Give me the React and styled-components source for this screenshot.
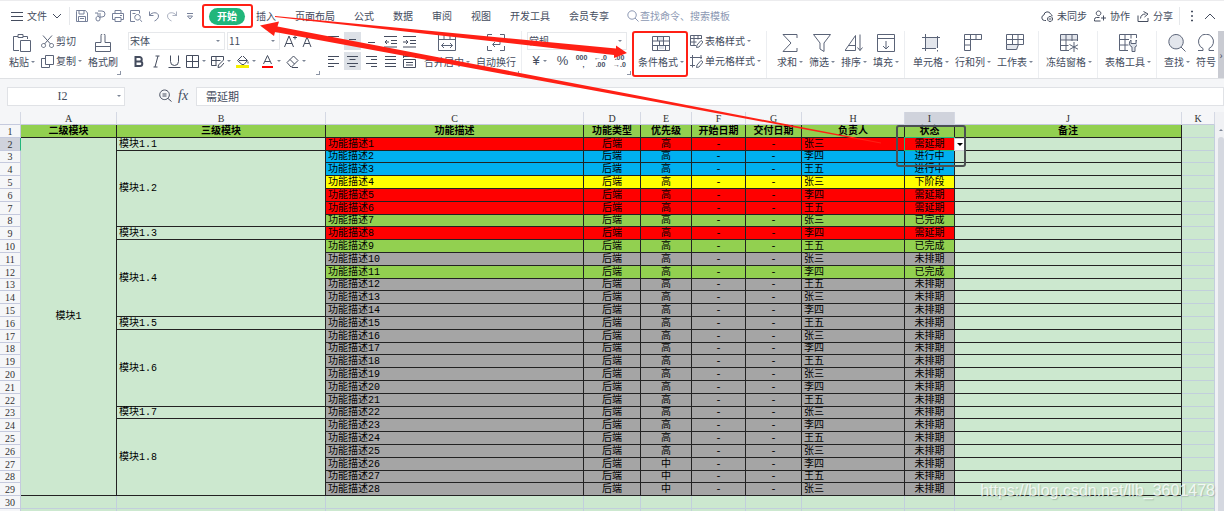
import React, { useState } from "react"
import styled, { createGlobalStyle } from "styled-components"

const GlobalStyle = createGlobalStyle`
  * {
    box-sizing: border-box;
  }
  body {
    margin: 0;
    background-color: #f5f6f8;
    font-family: "Noto Sans CJK SC", sans-serif;
    font-size: 10px;
    line-height: 14px;
    color: #444c5e;
  }
  button, input, select {
    font: inherit;
    color: inherit;
    border: none;
    background: none;
    padding: 0;
    margin: 0;
    outline: none;
  }
  svg {
    display: block;
    flex: none;
  }
`

const Page = styled.div`
  position: relative;
  height: 100vh;
  overflow: hidden;
  display: flex;
  flex-direction: column;
`

const Header = styled.header`
  background-color: #fff;
  border-top: 1px solid #ececee;
  border-bottom: 1px solid #dfe1e4;
`

const TabBar = styled.nav`
  display: flex;
  align-items: center;
  height: 30px;
  padding: 0 8px 0 11px;
  white-space: nowrap;
`

const BarButton = styled.button`
  display: flex;
  align-items: center;
  gap: 4px;
`

const Divider = styled.span`
  width: 1px;
  height: 18px;
  margin: 0 6px;
  background-color: #e6e8eb;
`

const QuickAccess = styled.div`
  display: flex;
  align-items: center;
  gap: 5px;
  margin-right: 12px;
  color: #77819a;
`

const Tabs = styled.div`
  display: flex;
  align-items: center;
  gap: 19px;
`

const Tab = styled.button`
  ${({ $active }) =>
    $active &&
    `
    width: 36px;
    height: 17px;
    margin-right: -8px;
    border-radius: 9px;
    background-color: #21b67b;
    color: #fff;
    font-weight: 700;
  `}
`

const Search = styled.label`
  display: flex;
  align-items: center;
  gap: 1px;
  margin-left: 18px;
  color: #8c98b3;
  input {
    width: 100px;
    &::placeholder {
      color: #8c98b3;
    }
  }
`

const Account = styled.div`
  display: flex;
  align-items: center;
  gap: 7px;
  margin-left: auto;
`

const WindowTools = styled.div`
  display: flex;
  gap: 6px;
`

const Ribbon = styled.div`
  display: flex;
  height: 47px;
  overflow: hidden;
`

const Group = styled.div`
  position: relative;
  display: flex;
  flex: none;
  gap: 6px;
  padding: 0 ${({ $right = 5 }) => $right}px 0 ${({ $left = 7 }) => $left}px;
  border-right: 1px solid ${({ $line = true }) => ($line ? "#eceef1" : "transparent")};
`

const Launcher = styled.button`
  position: absolute;
  right: 2px;
  bottom: 3px;
  width: 4px;
  height: 4px;
  border-right: 1px solid #8d95a5;
  border-bottom: 1px solid #8d95a5;
`

const Stack = styled.div`
  display: flex;
  flex-direction: column;
  gap: 2px;
  padding-top: 1px;
`

const Line = styled.div`
  display: flex;
  align-items: center;
  height: 18px;
  gap: ${({ $gap = 0 }) => $gap}px;
  padding-left: ${({ $indent = 0 }) => $indent}px;
`

const LargeButton = styled.button`
  display: flex;
  flex-direction: column;
  align-items: center;
  gap: 3px;
  padding-top: 3px;
  white-space: nowrap;
  svg {
    color: #5a6377;
  }
`

const Label = styled.span`
  display: flex;
  align-items: center;
  gap: 2px;
`

const TextButton = styled.button`
  display: flex;
  align-items: center;
  gap: 2px;
  height: 18px;
  white-space: nowrap;
  svg {
    color: #5a6377;
  }
`

const MiniButton = styled.button`
  display: flex;
  align-items: center;
  justify-content: center;
  gap: 3px;
  width: ${({ $wide }) => ($wide ? 25 : 17)}px;
  height: 18px;
  background-color: ${({ $on }) => ($on ? "#dde1e7" : "transparent")};
`

const SelectBox = styled.label`
  display: flex;
  align-items: center;
  width: ${({ $width }) => $width}px;
  height: 18px;
  padding-right: 4px;
  border: 1px solid #e6e8eb;
  select {
    flex: 1;
    min-width: 0;
    padding-left: 1px;
    appearance: none;
  }
`

const CaretShape = styled.i`
  flex: none;
  border: 2px solid transparent;
  border-top-color: #7c8596;
  border-bottom-width: 0;
`

const MoreButton = styled.button`
  flex: none;
  width: 6px;
  margin-left: auto;
  background-color: #c9cbd2;
`

const FormulaBar = styled.div`
  display: flex;
  align-items: center;
  height: 33px;
  padding-left: 7px;
  flex: none;
`

const NameBox = styled.label`
  display: flex;
  align-items: center;
  width: 118px;
  height: 19px;
  padding-right: 3px;
  margin-top: 1px;
  border: 1px solid #e0e2e6;
  background-color: #fff;
  input {
    flex: 1;
    min-width: 0;
    text-align: center;
    font-family: "Liberation Serif", serif;
    font-size: 12px;
  }
`

const FormulaTools = styled.div`
  display: flex;
  align-items: center;
  gap: 6px;
  width: 71px;
  padding-left: 34px;
`

const FormulaInput = styled.input`
  flex: 1;
  height: 19px;
  padding-left: 9px;
  margin-top: 1px;
  border: 1px solid #e0e2e6;
  background-color: #fff;
  font-size: 11px;
`

const SheetArea = styled.main`
  flex: 1;
  min-height: 0;
  display: flex;
`

const SheetScroll = styled.div`
  flex: 1;
  min-width: 0;
  overflow: hidden;
  background-color: #cce8cf;
`

const Sheet = styled.table`
  width: 100%;
  table-layout: fixed;
  border-collapse: separate;
  border-spacing: 0;
  font-family: "Liberation Serif", "Noto Sans CJK SC", serif;
  line-height: 11px;
  color: #000;
  tr {
    height: 13px;
  }
  tbody tr:nth-child(5n + 3) {
    height: 12px;
  }
`

const ColHead = styled.th`
  padding: 0;
  font-weight: 400;
  color: #333;
  background-color: ${({ $on }) => ($on ? "#d0d3dc" : "#f5f6f8")};
  border-right: 1px solid #d5d9e4;
  border-bottom: 1px solid #c5cade;
`

const RowHead = styled(ColHead)`
  border-right-color: ${({ $on }) => ($on ? "#21b67b" : "#c5cade")};
`

const Cell = styled.td`
  position: relative;
  padding: 0 2px;
  font-family: "Liberation Mono", "Noto Sans CJK SC", monospace;
  white-space: nowrap;
  text-align: ${({ $left }) => ($left ? "left" : "center")};
  background-color: ${({ $fill = "#cce8cf" }) => $fill};
  border-right: 1px solid ${({ $plain }) => ($plain ? "#c2cfdc" : "#222")};
  border-bottom: 1px solid ${({ $plain }) => ($plain ? "#c2cfdc" : "#222")};
`

const TitleCell = styled(Cell)`
  font-weight: 700;
  background-color: #92d050;
`

const Selection = styled.span`
  position: absolute;
  inset: -1px;
  border: 1px solid #21b67b;
`

const CellMenu = styled.button`
  position: absolute;
  top: 0;
  left: 100%;
  z-index: 1;
  display: flex;
  align-items: center;
  justify-content: center;
  width: 11px;
  height: 13px;
  background-color: #fff;
  border: 1px solid #ccd0d8;
  i {
    border-width: 3px 3px 0;
    border-top-color: #000;
  }
`

const ScrollBar = styled.div`
  display: flex;
  flex-direction: column;
  align-items: center;
  gap: 6px;
  width: 9px;
  padding: 17px 0 0 3px;
  background-color: #f0f1f4;
  i {
    transform: rotate(180deg);
  }
  span {
    flex: 1;
    width: 6px;
    border-radius: 3px 3px 0 0;
    background-color: #d5d8e0;
  }
`

const Marks = styled.svg`
  position: absolute;
  top: 0;
  left: 0;
  z-index: 2;
  pointer-events: none;
`

const Watermark = styled.span`
  position: absolute;
  right: 9px;
  bottom: 10px;
  z-index: 3;
  font-family: "Liberation Sans", sans-serif;
  font-size: 16px;
  line-height: 20px;
  color: rgba(255, 255, 255, 0.8);
  text-shadow: 1px 1px 1px rgba(90, 110, 95, 0.3);
`

const ICONS = {
  // title row, 12 x 12
  menu: <path d="M0 2.5h12M0 6.5h12M0 10.5h12" />,
  down: <path d="M2 4l4 4 4-4" />,
  up: <path d="M1 9l5-5 5 5" />,
  save: <path d="M.5 1.5v10h11V3L9.500 .5h-9zM3 .5v3.500h5V.5M2.500 11.500v-5h7v5M4 8.500h4" />,
  pdf: <path d="M4 1h4a3 3 0 0 1 0 6H6M6 3v6a2 2 0 0 1-4 0 2 2 0 0 1 4-1M1 3h3v3" />,
  print: <path d="M3 3.500v-3h6v3M3 9.500H.5v-6h11v6H9M3 7.500h6v4H3zM8 5.500h2" />,
  preview: <path d="M5 11.500H.5V.5h9v3M10 9.500l1.800 2.300M2.500 3.500h3M7.500 4.500a2.800 2.800 0 1 0 .1 0z" />,
  undo: <path d="M1.500 1.500v4h4M1.500 5.500C4 1.500 10.500 2 10.500 6c0 2.500-2 4-4 5" />,
  redo: <path opacity=".6" d="M10.500 1.500v4h-4M10.500 5.500C8 1.500 1.500 2 1.500 6c0 2.500 2 4 4 5" />,
  pin: <path d="M3 3.500h6M3.500 6h5L6 9z" />,
  search: <path d="M5 .8a4.200 4.200 0 1 0 .1 0zM8 8l3.500 3.500" />,
  cloud: <path d="M5 10.500H3.500a2.800 2.800 0 0 1-.6-5.500 3.500 3.500 0 0 1 6.800-.8 2.500 2.500 0 0 1 1.500 2M9 6.500a2.500 2.500 0 1 0 .1 0zM7.800 9h2.500" />,
  people: <path d="M4.500 1a2.300 2.300 0 1 0 .1 0zM.5 11V9.500a2 2 0 0 1 2-2h3M.5 11h6M9.500 5.500v5M7 8h5" />,
  share: <path d="M1 5.500v6h10V8M3.500 8.500c.2-3 2-4.500 5-4.500M6.500 1.500L11 4 7.500 7" />,
  dots: <path d="M5.500 1h1v1h-1zM5.500 5.500h1v1h-1zM5.500 10h1v1h-1z" />,

  // small ribbon tools, 13 x 13
  cut: <path d="M2 .5l7.500 8.500M11 .5L3.500 9M2.500 8.500a2 2 0 1 0 .1 0zM10.500 8.500a2 2 0 1 0 .1 0z" />,
  copy: <path d="M4.500 .5h8v9h-8zM4.500 3.500h-4v9h8v-3" />,
  grow: <path d="M.5 12L5 1l4.500 11M2 8.500h6M9 2.500h4M11 .5v4" />,
  shrink: <path d="M1 12L5 2l4 10M2.500 8.500h5M9 2.500h3.500" />,
  bold: <path strokeWidth="2" d="M3.500 2h4a2.200 2.200 0 0 1 0 4.500h-4M3.500 6.500h4.500a2.300 2.300 0 0 1 0 4.600H3.500V1" />,
  italic: <path d="M5.500 1h4M3.500 12h4M8 1L5 12" />,
  underline: <path d="M2.500 .5v6a4 4 0 0 0 8 0v-6M.5 12.500h12" />,
  border: <path d="M.5 .5h12v12H.5zM.5 6.500h12M6.500 .5v12" />,
  cellStyle: <path d="M12.500 5V1.500H.5v9h5M.5 5.500h9M5 1.500v9M7 12.500l.5-2.500 5-5M7 12.500l2.500-.5 3.500-4" />,
  bucket: (
    <>
      <path d="M6 1L1.500 5.500 6 9.500h2L11.500 5.500 7 1M3 5.500h8M12 6.500v2" />
      <path stroke="none" fill="#f5f000" d="M0 10h13v3H0z" />
    </>
  ),
  fontColor: (
    <>
      <path d="M2.500 9L6.500 .5l4 8.500M4 6.500h5" />
      <path stroke="none" fill="#f00" d="M1 11h11v2H1z" />
    </>
  ),
  eraser: <path d="M1 7.500L7.500 1 12 5.500 5.500 12H5zM4 4.500L8.500 9M6 12.500h6" />,
  alignTop: <path d="M1 1.500h11M3 5.500h7" />,
  alignMiddle: <path d="M3 4.500h7M1 7.500h11" />,
  alignBottom: <path d="M3 7.500h7M1 11.500h11" />,
  outdent: <path d="M0 1.500h13M7 5.500h6M7 8.500h6M0 12h13M5 7H1M3 5L1 7l2 2" />,
  indent: <path d="M0 1.500h13M7 5.500h6M7 8.500h6M0 12h13M0 7h4M3 5l2 2-2 2" />,
  alignLeft: <path d="M1 1.500h11M1 4.500h6M1 8.500h11M1 11.500h6" />,
  alignCenter: <path d="M1 1.500h11M3.500 4.500h6M1 8.500h11M3.500 11.500h6" />,
  alignRight: <path d="M1 1.500h11M6 4.500h6M1 8.500h11M6 11.500h6" />,
  justify: <path d="M1 1.500h11M1 4.500h11M1 8.500h11M1 11.500h11" />,
  distribute: <path d="M.5 0v3M12.500 0v3M.5 1.500h12M.5 4.500h12v8H.5zM3 7.500h7M3 10h7" />,
  tableStyle: <path d="M6 10.500H.5v-10h11V4M.5 3.500h11M.5 7h6M4 .5v10M8 .5v4M6.500 12.500l.5-2.500 4-4.500 2 1.500L9 12z" />,
  cellFormat: <path d="M2.500 0v12.500M0 2.500h12M11 0v4M0 10.500h5M6.500 12.500l.5-2.500 4-4.500 2 1.500L9 12z" />,
  zoomOut: <path d="M5.500 1a4.800 4.800 0 1 0 .1 0zM9 9.500l3.500 3M3.500 5h4M3.500 7h4" />,

  // large ribbon tools, 18 x 18
  paste: <path d="M5 2.500H.5v14H6M10 2.500h4.500V5M5 .5h5v3H5zM7.500 6.500h10v11h-10z" />,
  brush: <path d="M7 8.500v-7a2 2 0 0 1 4 0v7h5.500v9h-15v-9zM1.500 12.500h15" />,
  merge: <path d="M.5 .5h17v16H.5zM.5 5.500h17M6 .5v5M12 .5v5M3.500 11.500h11M6 9l-2.500 2.500L6 14M12 9l2.500 2.500L12 14" />,
  wrap: <path d="M5 .5H.5V5M13 .5h4.500V5M.5 12v4.500H5M17.500 12v4.500H13M5 5.500h8v5H6M8 8l-2.500 2.500L8 13" />,
  conditional: (
    <>
      <path stroke="none" fill="#dfe3ea" d="M5 2h6v5H5zM7 11h5v4H7z" />
      <path d="M.5 2.500h17v14H.5zM.5 7h17M.5 11.500h17M5.500 2.500V7M11.500 2.500v9M5.500 11.500v5M7.500 7v5M13.500 11.500v5" />
    </>
  ),
  sum: <path d="M16 4V.5H2L10 9l-8 8.500h14V14" />,
  filter: <path d="M.5 .5h17L11 9v8.500L7 15V9z" />,
  sort: <path d="M0 16.500h10.500v-15L0 16.500M4 11.500h6.500M15 .5v16M12.500 13.500l2.500 3 2.500-3" />,
  fill: <path d="M.5 .5h17v17H.5zM.5 4.500h17M9 7v8M6 12l3 3 3-3" />,
  cell: (
    <>
      <path stroke="none" fill="#e3e6ec" d="M3 4h13v10H3z" />
      <path d="M3.500 0v17M15.500 2v12M0 3.500h18M0 14.500h14M15.500 16v1.500" />
    </>
  ),
  rowsCols: <path d="M.5 .5h17v5h-11v11h-6zM.5 5.500h6V.5M12 .5v5M.5 11h6" />,
  worksheet: (
    <>
      <path stroke="none" fill="#e3e6ec" d="M1 11h11v5H1z" />
      <path d="M.5 .5h17v10H.5zM.5 5.500h17M6.500 .5v10M12 .5v10M.5 10.500v5h10l2-5" />
    </>
  ),
  freeze: (
    <>
      <path stroke="none" fill="#e3e6ec" d="M1 1h16v5H1z" />
      <path d="M9 16.500H.5v-16h17V7M.5 6h17M.5 11.500h8M6 .5v16M12 .5V7M14 8v10M9.500 10.500l9 5M18.500 10.500l-9 5" />
    </>
  ),
  tools: (
    <>
      <path d="M9 16.500H.5v-16h17V4M.5 5.500H10M.5 11h9M6 .5v16M12 .5v4" />
      <path fill="#dfe3ea" d="M12 6a4 4 0 0 0 1 7v4.500h3V13a4 4 0 0 0 1-7v3.500h-5z" />
    </>
  ),
  find: <path fill="#e3e6ec" d="M8 .5a7.200 7.200 0 1 0 .1 0zM13 13l4.500 4.500" />,
  symbol: <path d="M1 16.500h5v-2A7.500 7.500 0 1 1 12 14.500v2h5" />,
}

const Icon = ({ name, size = 13 }) => (
  <svg width={size} height={size} viewBox={`0 0 ${size} ${size}`} fill="none" stroke="currentColor" aria-hidden="true">
    {ICONS[name]}
  </svg>
)

const Large = ({ icon, label, caret = true }) => (
  <LargeButton>
    <Icon name={icon} size={18} />
    <Label>
      {label}
      {caret && <CaretShape />}
    </Label>
  </LargeButton>
)

const Small = ({ icon, label, caret = true }) => (
  <TextButton>
    <Icon name={icon} />
    {label}
    {caret && <CaretShape />}
  </TextButton>
)

const Mini = ({ icon, label, caret, on, children }) => (
  <MiniButton aria-label={label || icon} $wide={caret} $on={on}>
    {children || <Icon name={icon} />}
    {caret && <CaretShape />}
  </MiniButton>
)

const NumberGlyph = styled.span`
  font-family: "Liberation Sans", sans-serif;
  font-size: ${({ $small }) => ($small ? 7 : 13)}px;
  font-weight: ${({ $small }) => ($small ? 700 : 400)};
  line-height: ${({ $small }) => ($small ? 7 : 14)}px;
  white-space: pre;
`

const FormulaSign = styled.span`
  font-family: "Liberation Serif", serif;
  font-size: 14px;
  font-style: italic;
`

const tabs = ["开始", "插入", "页面布局", "公式", "数据", "审阅", "视图", "开发工具", "会员专享"]
const quick = ["save", "pdf", "print", "preview", "undo", "redo", "pin"]

const columns = [
  { name: "A", width: 96, title: "二级模块" },
  { name: "B", width: 209, title: "三级模块" },
  { name: "C", width: 258, title: "功能描述" },
  { name: "D", width: 57, title: "功能类型" },
  { name: "E", width: 51, title: "优先级" },
  { name: "F", width: 54, title: "开始日期" },
  { name: "G", width: 56, title: "交付日期" },
  { name: "H", width: 103, title: "负责人" },
  { name: "I", width: 50, title: "状态" },
  { name: "J", title: "备注" },
  { name: "K", width: 33 },
]

const fills = {
  需延期: "#ff0000",
  进行中: "#00b0f0",
  下阶段: "#ffff00",
  已完成: "#92d050",
  未排期: "#a5a5a5",
}

const people = ["张三", "李四", "王五"]
const firstStates = [
  "需延期", "进行中", "进行中", "下阶段", "需延期", "需延期",
  "已完成", "需延期", "已完成", "未排期", "已完成",
]

// first task of each module -> [label, number of rows]
const modules = {
  1: ["模块1.1", 1],
  2: ["模块1.2", 6],
  8: ["模块1.3", 1],
  9: ["模块1.4", 6],
  15: ["模块1.5", 1],
  16: ["模块1.6", 6],
  22: ["模块1.7", 1],
  23: ["模块1.8", 6],
}

const tasks = Array.from({ length: 28 }, (_, i) => ({
  id: i + 1,
  owner: people[i % 3],
  priority: i < 25 ? "高" : "中",
  status: firstStates[i] || "未排期",
}))

const TaskRow = ({ task }) => {
  const { id, owner, priority, status } = task
  const fill = fills[status]
  const active = id === 1

  return (
    <tr>
      <RowHead scope="row" $on={active}>{id + 1}</RowHead>
      {active && <Cell rowSpan={28}>模块1</Cell>}
      {modules[id] && <Cell $left rowSpan={modules[id][1]}>{modules[id][0]}</Cell>}
      <Cell $left $fill={fill}>功能描述{id}</Cell>
      <Cell $fill={fill}>后端</Cell>
      <Cell $fill={fill}>{priority}</Cell>
      <Cell $fill={fill}>-</Cell>
      <Cell $fill={fill}>-</Cell>
      <Cell $left $fill={fill}>{owner}</Cell>
      <Cell $fill={fill}>
        {status}
        {active && (
          <>
            <Selection />
            <CellMenu aria-label="status options"><CaretShape /></CellMenu>
          </>
        )}
      </Cell>
      <Cell />
      <Cell $plain />
    </tr>
  )
}

const EmptyRow = ({ number }) => (
  <tr>
    <RowHead scope="row">{number}</RowHead>
    {columns.map(column => (
      <Cell key={column.name} $plain />
    ))}
  </tr>
)

const Annotations = () => (
  <Marks width="1224" height="180" fill="none" aria-hidden="true">
    <g fill="#ff2015">
      <path d="M275 16L616 48.500V45.500L627 53 614 58V55L275 17z" />
      <path d="M260 25.500L279 21.500 277.500 26.500 640 96 881 142.500V143.500L640 99 275 32 274 36z" />
    </g>
    <rect x="203" y="5" width="49" height="22" rx="2" stroke="#ff2015" strokeWidth="2" />
    <rect x="633" y="32" width="54" height="44" rx="2" stroke="#ff2015" strokeWidth="2" />
    <rect x="897" y="126" width="68" height="40" rx="2" stroke="#4b5052" strokeWidth="2" />
  </Marks>
)

const App = () => {
  const [cellName, setCellName] = useState("I2")
  const [formula, setFormula] = useState("需延期")
  const [query, setQuery] = useState("")

  return (
    <Page>
      <GlobalStyle />
      <Header>
        <TabBar>
          <BarButton>
            <Icon name="menu" size={12} />
            文件
            <Icon name="down" size={12} />
          </BarButton>
          <Divider />
          <QuickAccess>
            {quick.map(name => (
              <BarButton key={name} aria-label={name}>
                <Icon name={name} />
              </BarButton>
            ))}
          </QuickAccess>
          <Tabs>
            {tabs.map((tab, i) => (
              <Tab key={tab} $active={i === 0}>{tab}</Tab>
            ))}
          </Tabs>
          <Search>
            <Icon name="search" size={12} />
            <input
              type="text"
              aria-label="search"
              placeholder="查找命令、搜索模板"
              value={query}
              onChange={e => setQuery(e.currentTarget.value)}
            />
          </Search>
          <Account>
            <BarButton><Icon name="cloud" size={12} />未同步</BarButton>
            <BarButton><Icon name="people" size={12} />协作</BarButton>
            <BarButton><Icon name="share" size={12} />分享</BarButton>
          </Account>
          <Divider />
          <WindowTools>
            <BarButton aria-label="more"><Icon name="dots" size={12} /></BarButton>
            <BarButton aria-label="collapse"><Icon name="up" size={12} /></BarButton>
          </WindowTools>
        </TabBar>

        <Ribbon>
          <Group $left={9} $line={false}>
            <Large icon="paste" label="粘贴" />
            <Stack>
              <Small icon="cut" label="剪切" caret={false} />
              <Small icon="copy" label="复制" />
            </Stack>
            <Large icon="brush" label="格式刷" caret={false} />
            <Launcher aria-label="clipboard options" />
          </Group>

          <Group $left={4} $line={false}>
            <Stack>
              <Line $gap={2}>
                <SelectBox $width={97}>
                  <select aria-label="font"><option>宋体</option></select>
                  <CaretShape />
                </SelectBox>
                <SelectBox $width={53}>
                  <select aria-label="font size"><option>11</option></select>
                  <CaretShape />
                </SelectBox>
                <Line $gap={1}>
                  <Mini icon="grow" />
                  <Mini icon="shrink" />
                </Line>
              </Line>
              <Line $indent={2}>
                <Line $gap={1}>
                  <Mini icon="bold" />
                  <Mini icon="italic" />
                  <Mini icon="underline" />
                </Line>
                <Mini icon="border" caret />
                <Mini icon="cellStyle" caret />
                <Mini icon="bucket" caret />
                <Mini icon="fontColor" caret />
                <Mini icon="eraser" caret />
              </Line>
            </Stack>
            <Launcher aria-label="font options" />
          </Group>

          <Group $left={2}>
            <Stack>
              <Line $gap={2}>
                <Mini icon="alignTop" />
                <Mini icon="alignMiddle" on />
                <Mini icon="alignBottom" />
                <Mini icon="outdent" />
                <Mini icon="indent" />
              </Line>
              <Line $gap={2}>
                <Mini icon="alignLeft" />
                <Mini icon="alignCenter" on />
                <Mini icon="alignRight" />
                <Mini icon="justify" />
                <Mini icon="distribute" />
              </Line>
            </Stack>
            <Large icon="merge" label="合并居中" />
            <Large icon="wrap" label="自动换行" caret={false} />
            <Launcher aria-label="alignment options" />
          </Group>

          <Group $left={5} $line={false}>
            <Stack>
              <SelectBox $width={100}>
                <select aria-label="number format"><option>常规</option></select>
                <CaretShape />
              </SelectBox>
              <Line $gap={2}>
                <Mini label="currency" caret><NumberGlyph>¥</NumberGlyph></Mini>
                <Mini label="percent"><NumberGlyph>%</NumberGlyph></Mini>
                <Mini label="thousands"><NumberGlyph $small>{"000\n  ,"}</NumberGlyph></Mini>
                <Mini label="more decimals"><NumberGlyph $small>{"←.0\n.00"}</NumberGlyph></Mini>
                <Mini label="fewer decimals"><NumberGlyph $small>{".00\n→.0"}</NumberGlyph></Mini>
              </Line>
            </Stack>
            <Launcher aria-label="number options" />
          </Group>

          <Group $left={4}>
            <Large icon="conditional" label="条件格式" />
            <Stack>
              <Small icon="tableStyle" label="表格样式" />
              <Small icon="cellFormat" label="单元格样式" />
            </Stack>
          </Group>

          <Group $left={10}>
            <Large icon="sum" label="求和" />
            <Large icon="filter" label="筛选" />
            <Large icon="sort" label="排序" />
            <Large icon="fill" label="填充" />
          </Group>
          <Group $left={8}>
            <Large icon="cell" label="单元格" />
            <Large icon="rowsCols" label="行和列" />
            <Large icon="worksheet" label="工作表" />
          </Group>
          <Group>
            <Large icon="freeze" label="冻结窗格" />
          </Group>
          <Group>
            <Large icon="tools" label="表格工具" />
          </Group>
          <Group $line={false} $right={0}>
            <Large icon="find" label="查找" />
            <Large icon="symbol" label="符号" caret={false} />
          </Group>
          <MoreButton aria-label="more tools">›</MoreButton>
        </Ribbon>
      </Header>

      <FormulaBar>
        <NameBox>
          <input
            type="text"
            aria-label="cell name"
            value={cellName}
            onChange={e => setCellName(e.currentTarget.value)}
          />
          <CaretShape />
        </NameBox>
        <FormulaTools>
          <Icon name="zoomOut" />
          <FormulaSign>fx</FormulaSign>
        </FormulaTools>
        <FormulaInput
          type="text"
          aria-label="formula"
          value={formula}
          onChange={e => setFormula(e.currentTarget.value)}
        />
      </FormulaBar>

      <SheetArea>
        <SheetScroll>
          <Sheet>
            <colgroup>
              <col width="21" />
              {columns.map(column => (
                <col key={column.name} width={column.width} />
              ))}
            </colgroup>
            <thead>
              <tr>
                <ColHead />
                {columns.map(({ name }) => (
                  <ColHead key={name} scope="col" $on={name === "I"}>{name}</ColHead>
                ))}
              </tr>
            </thead>
            <tbody>
              <tr>
                <RowHead scope="row">1</RowHead>
                {columns.map(({ name, title }) =>
                  title ? <TitleCell key={name}>{title}</TitleCell> : <Cell key={name} $plain />
                )}
              </tr>
              {tasks.map(task => (
                <TaskRow key={task.id} task={task} />
              ))}
              <EmptyRow number={30} />
              <EmptyRow />
            </tbody>
          </Sheet>
        </SheetScroll>
        <ScrollBar>
          <CaretShape />
          <span />
        </ScrollBar>
      </SheetArea>

      <Annotations />
      <Watermark>https://blog.csdn.net/llb_3601478</Watermark>
    </Page>
  )
}

export default App
